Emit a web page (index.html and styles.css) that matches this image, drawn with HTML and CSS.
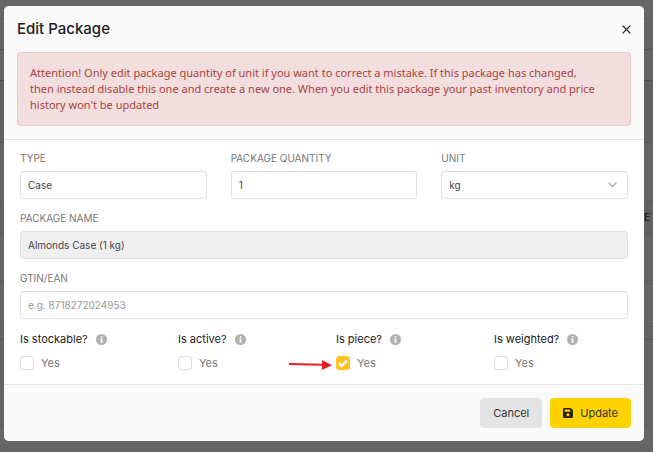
FILE: index.html
```
<!DOCTYPE html>
<html lang="en">
<head>
<meta charset="utf-8">
<title>Edit Package</title>
<meta name="viewport" content="width=device-width, initial-scale=1">
<link rel="stylesheet" href="styles.css">
</head>
<body>
<svg class="sprite" aria-hidden="true">
  <symbol id="info" viewBox="0 0 11 11">
    <circle cx="5.5" cy="5.5" r="5.5" fill="#b0b0b0"/>
    <path d="M4.8 2h1.5v1.5H4.8zM4.2 4.4h2.1v3.2h.6v1H4.2v-1h.6V5.4h-.6z" fill="#fff"/>
  </symbol>
</svg>
<div class="backdrop" aria-hidden="true">
  <div class="strip strip-top"></div>
  <div class="strip strip-nav"></div>
  <div class="strip strip-nav"></div>
  <div class="strip strip-tools"></div>
  <div class="strip strip-filter"></div>
  <div class="strip strip-head">E</div>
  <div class="strip strip-row"></div>
  <div class="strip strip-row"></div>
  <div class="strip strip-gap"></div>
  <div class="strip strip-list"></div>
  <div class="strip strip-end"></div>
</div>
<form class="modal" role="dialog" aria-labelledby="title">
  <header class="modal-header">
    <div class="title-bar">
      <h1 id="title">Edit Package</h1>
      <button class="close" type="button" aria-label="Close">
        <svg width="9" height="9" viewBox="0 0 9 9"><path d="M.6.6l7.8 7.8M8.4.6L.6 8.4" stroke="#222" stroke-width="1.3" fill="none"/></svg>
      </button>
    </div>
    <p class="alert">Attention! Only edit package quantity of unit if you want to correct a mistake. If this package has changed, then instead disable this one and create a new one. When you edit this package your past inventory and price history won't be updated</p>
  </header>
  <div class="modal-body">
    <div class="fields">
      <div class="field">
        <label for="type">TYPE</label>
        <input id="type" type="text" value="Case">
      </div>
      <div class="field">
        <label for="quantity">PACKAGE QUANTITY</label>
        <input id="quantity" type="text" inputmode="decimal" value="1">
      </div>
      <div class="field">
        <label for="unit">UNIT</label>
        <div class="select">
          <select id="unit"><option>kg</option></select>
          <svg class="chevron" width="9" height="6" viewBox="0 0 9 6"><path d="M.7.8l3.8 3.8L8.3.8" stroke="#aaa" stroke-width="1.4" fill="none"/></svg>
        </div>
      </div>
      <div class="field wide">
        <label for="name">PACKAGE NAME</label>
        <input id="name" type="text" value="Almonds Case (1 kg)" readonly>
      </div>
      <div class="field wide">
        <label for="gtin">GTIN/EAN</label>
        <input id="gtin" type="text" placeholder="e.g. 8718272024953">
      </div>
    </div>
    <div class="options">
      <fieldset class="option">
        <legend>Is stockable? <svg class="info"><use href="#info"/></svg></legend>
        <label class="check"><input type="checkbox">Yes</label>
      </fieldset>
      <fieldset class="option">
        <legend>Is active? <svg class="info"><use href="#info"/></svg></legend>
        <label class="check"><input type="checkbox">Yes</label>
      </fieldset>
      <fieldset class="option">
        <legend>Is piece? <svg class="info"><use href="#info"/></svg></legend>
        <label class="check"><input type="checkbox" checked>Yes
          <svg class="tick" width="14" height="14" viewBox="0 0 14 14"><path d="M2.9 7.1l2.8 2.8 5.4-5.5" stroke="#fff" stroke-width="2.3" fill="none"/></svg>
        </label>
        <svg class="arrow" width="43" height="11" viewBox="0 0 43 11"><path d="M0 4l34 .8" stroke="#e81c24" stroke-width="2" fill="none"/><path d="M33 0l10 5.3L33 10z" fill="#e81c24"/></svg>
      </fieldset>
      <fieldset class="option">
        <legend>Is weighted? <svg class="info"><use href="#info"/></svg></legend>
        <label class="check"><input type="checkbox">Yes</label>
      </fieldset>
    </div>
  </div>
  <footer class="modal-footer">
    <button class="button cancel" type="button">Cancel</button>
    <button class="button update" type="submit">
      <svg width="10" height="10" viewBox="0 0 10 10"><path fill="#29230a" fill-rule="evenodd" d="M1.2 0h6.6L10 2.2v6.6A1.2 1.2 0 0 1 8.800 10H1.200A1.200 1.200 0 0 1 0 8.800V1.200A1.200 1.200 0 0 1 1.200 0zM1.600 1.400v2.400h5.600V1.400zM5 5.300a1.500 1.500 0 1 0 0 3 1.500 1.500 0 0 0 0-3z"/></svg>
      Update
    </button>
  </footer>
</form>
</body>
</html>
```
FILE: styles.css
```
* { box-sizing: border-box; }

body {
  margin: 0;
  min-height: 100vh;
  padding: 6px 9px 8px 4px;
  background: #666;
  font-family: Inter, "Liberation Sans", sans-serif;
  font-size: 11px;
  color: #222;
}

.sprite { position: absolute; width: 0; height: 0; }

/* Dimmed page behind the dialog */
.backdrop {
  position: absolute;
  inset: 0;
  overflow: hidden;
}
.strip { border-bottom: 1px solid #5c5c5c; background: #646464; }
.strip-top { height: 19px; background: #666; }
.strip-nav { height: 31px; border-color: #4d4d4d; }
.strip-tools { height: 62px; background: #606060; }
.strip-filter { height: 58px; background: #666; }
.strip-head {
  height: 34px;
  line-height: 32px;
  background: #616161;
  color: #222;
  font-size: 10px;
  font-weight: 600;
  text-align: right;
  padding-right: 3px;
}
.strip-row { height: 46px; background: #656565; }
.strip-gap { height: 13px; border-bottom-width: 2px; }
.strip-list { height: 87px; }
.strip-end { height: 26px; background: #666; border: 0; }

.modal {
  position: relative;
  border-radius: 5px;
  background: #fff;
  overflow: hidden;
}

.modal-header {
  padding: 12px 13px 13px;
  background: #fafafa;
  border-bottom: 1px solid #e4e4e4;
}
.title-bar {
  display: flex;
  justify-content: space-between;
  align-items: center;
  height: 22px;
  margin-bottom: 12px;
}
h1 {
  margin: 0;
  font-size: 15px;
  line-height: 22px;
  font-weight: 500;
}
.close {
  display: flex;
  padding: 0;
  border: 0;
  background: none;
}
.alert {
  margin: 0;
  padding: 12px 30px 12px 12px;
  border: 1px solid #eccbd0;
  border-radius: 3px;
  background: #f2dede;
  color: #a94442;
  font-family: "Noto Sans", "Open Sans", sans-serif;
  font-size: 11px;
  line-height: 16px;
}

.modal-body { padding: 11px 16px 14px; }
.fields {
  display: grid;
  grid-template-columns: repeat(3, 1fr);
  gap: 12px 24px;
}
.wide { grid-column: 1 / -1; }
.field { display: flex; flex-direction: column; gap: 6px; }
.field label {
  font-size: 10px;
  line-height: 14px;
  color: #777;
}
.field input, .field select {
  width: 100%;
  height: 28px;
  margin: 0;
  padding: 0 7px;
  border: 1px solid #e2e2e2;
  border-radius: 3px;
  background: #fff;
  font: inherit;
  font-size: 10px;
  color: #444;
  appearance: none;
}
.field input[readonly] { background: #efefef; }
.field input::placeholder { color: #999; }
.select { position: relative; }
.chevron { position: absolute; right: 11px; top: 11px; }

.options {
  display: grid;
  grid-template-columns: repeat(4, 1fr);
  gap: 24px;
  margin-top: 12px;
}
.option { position: relative; margin: 0; padding: 0; border: 0; min-width: 0; }
legend {
  display: flex;
  align-items: center;
  gap: 8px;
  padding: 0;
  line-height: 16px;
}
.info { width: 11px; height: 11px; }
.check {
  display: flex;
  align-items: center;
  gap: 7px;
  height: 14px;
  margin-top: 9px;
  line-height: 14px;
  color: #777;
}
.check input {
  width: 14px;
  height: 14px;
  margin: 0;
  border: 1px solid #ddd;
  border-radius: 3px;
  background: #fff;
  appearance: none;
}
.check input:checked { background: #ffc11e; border-color: #ffc11e; }
.tick { position: absolute; left: 0; bottom: 0; }
.arrow { position: absolute; right: calc(100% + 4px); bottom: -1px; }

.modal-footer {
  display: flex;
  justify-content: flex-end;
  align-items: center;
  gap: 8px;
  padding: 13px;
  background: #fafafa;
  border-top: 1px solid #e4e4e4;
}
.button {
  display: flex;
  align-items: center;
  justify-content: center;
  gap: 7px;
  height: 30px;
  padding: 0 13px;
  border: 0;
  border-radius: 4px;
  font: inherit;
  color: #333;
}
.cancel { background: #e4e4e4; }
.update { background: #ffd200; }
```
